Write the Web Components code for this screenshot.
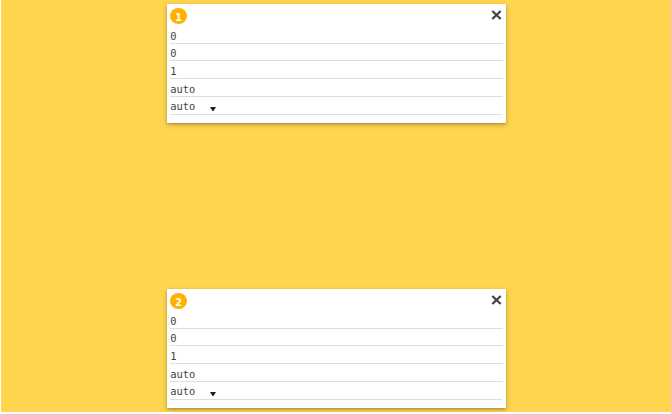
<!DOCTYPE html>
<html lang="en">
<head>
<meta charset="utf-8">
<title>Flex items</title>
<style>
html, body { margin: 0; height: 414px; background: #fff; overflow: hidden; }
</style>
</head>
<body>
<flex-board>
  <item-card><item-badge slot="badge">1</item-badge>
    <item-field>0</item-field><item-field style="--h:17px">0</item-field><item-field>1</item-field><item-field>auto</item-field><item-field select>auto</item-field>
  </item-card>
  <item-card><item-badge slot="badge">2</item-badge>
    <item-field>0</item-field><item-field style="--h:17px">0</item-field><item-field>1</item-field><item-field>auto</item-field><item-field select>auto</item-field>
  </item-card>
</flex-board>
<script>
const define = (name, html) => customElements.define(name, class extends HTMLElement {
  constructor() {
    super();
    const t = document.createElement('template');
    t.innerHTML = html;
    this.attachShadow({ mode: 'open' }).append(t.content.cloneNode(true));
  }
});

define('flex-board', `<style>
:host { display: flex; flex-direction: column; align-items: center; gap: 166px; box-sizing: border-box;
  height: 412px; margin-left: 1px; padding: 4px 0 0 1px; background: #ffd54f; overflow: hidden; }
</style><slot></slot>`);

define('item-card', `<style>
:host { display: flex; flex-direction: column; box-sizing: border-box; flex: none; width: 339px; height: 119px;
  padding: 4px 3px 0; background: #fff;
  box-shadow: 0 2px 5px rgba(0,0,0,.22), 0 1px 2px rgba(0,0,0,.18); }
header { display: flex; justify-content: space-between; align-items: flex-start; height: 18px; }
svg { display: block; margin: 2px 1px 0 0; }
</style>
<header><slot name="badge"></slot>
<svg width="11" height="10" viewBox="0 0 11 10"><path d="M1.3 1 9.7 9M9.7 1 1.3 9" stroke="#424242" stroke-width="2.2" fill="none"/></svg></header>
<slot></slot>`);

define('item-badge', `<style>
:host { display: flex; align-items: center; justify-content: center; box-sizing: border-box; width: 17px; height: 16px;
  padding-top: 3px; border-radius: 50%; background: #ffb300; color: #fff;
  font: bold 9.6px/13px "DejaVu Sans", sans-serif; }
</style><slot></slot>`);

define('item-field', `<style>
:host { display: flex; align-items: flex-end; box-sizing: border-box; height: var(--h, 18px); flex: none;
  border-bottom: 1px solid #dedede; color: #424242; font: 10.4px/13px "DejaVu Sans Mono", monospace; }
:host([select]) { margin-right: 1px; }
span { padding-left: .3px; }
:host([select]) span { padding-bottom: 1px; }
svg { display: none; margin: 0 0 3px 14.7px; }
:host([select]) svg { display: block; }
</style><span><slot></slot></span><svg width="6" height="4" viewBox="0 0 6 4"><path d="M0 0H6L3.5 4H2.5Z" fill="#222"/></svg>`);
</script>
</body>
</html>
